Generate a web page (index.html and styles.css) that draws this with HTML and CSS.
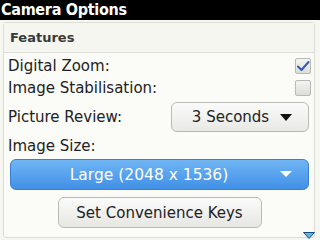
FILE: index.html
```html
<!DOCTYPE html>
<html>
<head>
<meta charset="utf-8">
<link rel="stylesheet" href="styles.css">
</head>
<body>
<div class="titlebar">Camera Options</div>
<div class="panel">
  <div class="section-head">Features</div>
  <div class="rows">
    <div class="row check-row">
      <span class="label">Digital Zoom:</span>
      <span class="checkbox checked">
        <svg width="14" height="12" viewBox="0 0 14 12"><path d="M2 6.5 L5.5 10 L12.5 2" fill="none" stroke="#2d5fb0" stroke-width="2" stroke-linecap="round" stroke-linejoin="round"/></svg>
      </span>
    </div>
    <div class="row check-row">
      <span class="label">Image Stabilisation:</span>
      <span class="checkbox"></span>
    </div>
    <div class="row review-row">
      <span class="label">Picture Review:</span>
      <div class="dropdown">
        <span>3 Seconds</span>
        <svg class="caret" width="12" height="7" viewBox="0 0 12 7"><path d="M0 0 H12 L6 7 Z" fill="#111"/></svg>
      </div>
    </div>
    <div class="row size-label"><span class="label">Image Size:</span></div>
    <div class="blue-dropdown">
      <span>Large (2048 x 1536)</span>
      <svg class="caret-w" width="12" height="6" viewBox="0 0 12 6"><path d="M0 0 H12 L6 6 Z" fill="#fff"/></svg>
    </div>
    <div class="btn-wrap"><div class="button">Set Convenience Keys</div></div>
  </div>
</div>
<svg class="more" width="12" height="7" viewBox="0 0 12 7"><path d="M0.5 0.5 H11.5 L6 6.5 Z" fill="#5ab4e6" stroke="#1c4f7a" stroke-width="1"/></svg>
</body>
</html>
```
FILE: styles.css
```css
html, body {
  margin: 0;
  padding: 0;
}
body {
  width: 320px;
  height: 240px;
  overflow: hidden;
  background: #f7f7f2;
  font-family: "DejaVu Sans", "Liberation Sans", sans-serif;
  color: #222;
  position: relative;
}
.titlebar {
  height: 20px;
  background: #000;
  color: #fff;
  font-family: "DejaVu Sans Condensed", "DejaVu Sans", sans-serif;
  font-weight: bold;
  font-size: 16px;
  line-height: 19px;
  padding-left: 1px;
  letter-spacing: -0.3px;
}
.panel {
  margin: 2px 5px 0 3px;
  height: 216px;
  border: 1px solid #dcdcd6;
  border-radius: 3px;
  background: #fbfbf8;
  box-sizing: border-box;
}
.section-head {
  height: 29px;
  line-height: 30px;
  padding-left: 6px;
  font-weight: bold;
  font-size: 13px;
  color: #3a3a3a;
  border-bottom: 1px solid #dcdcd6;
  background: #f6f6f1;
}
.rows {
  padding: 0 3px 0 4px;
}
.row {
  display: flex;
  align-items: center;
  justify-content: space-between;
}
.label {
  font-size: 15px;
  color: #222;
}
.check-row {
  height: 22px;
}
.check-row:first-child {
  margin-top: 2px;
}
.checkbox {
  width: 16px;
  height: 16px;
  box-sizing: border-box;
  border: 1px solid #b8b8b4;
  border-radius: 2px;
  background: linear-gradient(#f4f4f2, #dcdcd8);
  display: flex;
  align-items: center;
  justify-content: center;
}
.review-row {
  height: 36px;
}
.dropdown {
  width: 138px;
  height: 30px;
  margin-right: 2px;
  box-sizing: border-box;
  border: 1px solid #b9b9b5;
  border-radius: 6px;
  background: linear-gradient(#fbfbfa, #e8e8e5);
  display: flex;
  align-items: center;
  justify-content: center;
  gap: 11px;
  padding-left: 4px;
  font-size: 15px;
  color: #222;
}
.size-label {
  height: 22px;
}
.blue-dropdown {
  margin: 2px 2px 0 2px;
  height: 31px;
  box-sizing: border-box;
  border-radius: 6px;
  border: 1px solid #3c7fd0;
  background: linear-gradient(#70b5f4, #4190e6);
  color: #fff;
  font-size: 15.5px;
  display: flex;
  align-items: center;
  justify-content: center;
  padding-right: 21px;
  position: relative;
}
.caret-w {
  position: absolute;
  right: 16px;
  top: 11px;
}
.btn-wrap {
  display: flex;
  justify-content: center;
  margin-top: 7px;
}
.button {
  width: 204px;
  height: 31px;
  box-sizing: border-box;
  border: 1px solid #b9b9b5;
  border-radius: 6px;
  background: linear-gradient(#fbfbfa, #e6e6e3);
  font-size: 15px;
  display: flex;
  align-items: center;
  justify-content: center;
  color: #222;
}
.more {
  position: absolute;
  right: 5px;
  bottom: 1px;
}
```
